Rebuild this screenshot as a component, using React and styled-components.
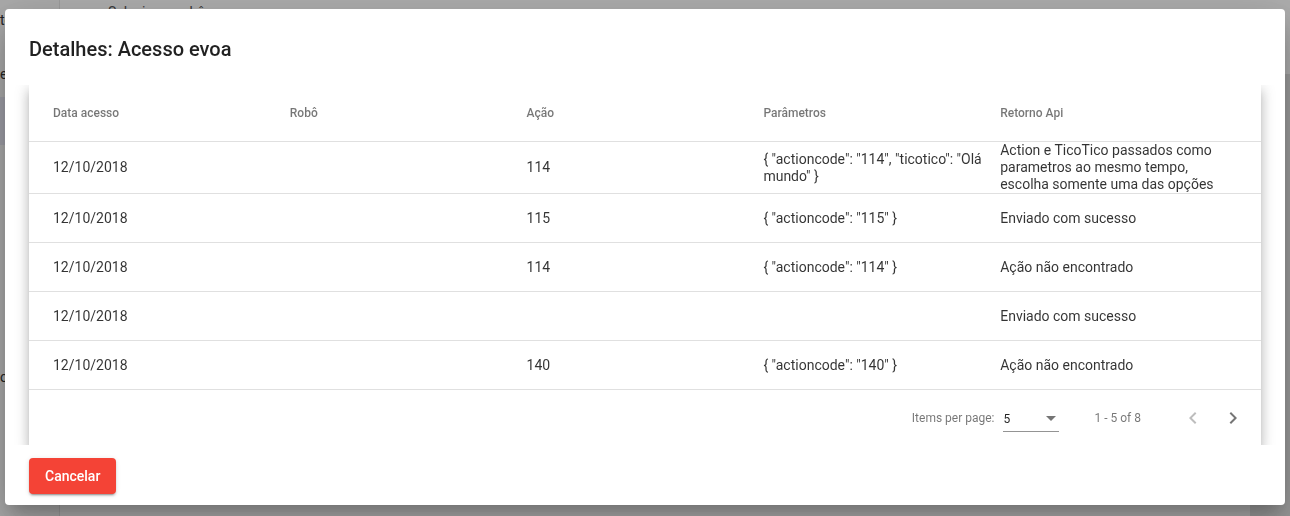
import React from 'react'
import styled, { createGlobalStyle } from 'styled-components'

const GlobalStyle = createGlobalStyle`
    html, body {
        margin: 0;
        padding: 0;
        height: 100%;
        overflow: hidden;
        background: #fff;
        font-family: Roboto, "Helvetica Neue", sans-serif;
    }
    #root {
        height: 100%;
    }
`

// page behind the dialog
const Page = styled.div`
    display: flex;
    height: 100%;
    background: #fff;
`

const Sidebar = styled.nav`
    width: 59px;
    flex-shrink: 0;
    background: #fafafa;
    border-right: 1px solid #e6e6e6;
    display: flex;
    flex-direction: column;
    padding-top: 10px;
    overflow: hidden;
`

const SideItem = styled.div`
    height: ${(props) => props.height || 48}px;
    flex-shrink: 0;
    display: flex;
    align-items: center;
    font-size: 14px;
    color: #333;
    white-space: nowrap;
    padding-left: ${(props) => (props.active ? 16 : 0)}px;
    background: ${(props) => (props.active ? '#e8e8f4' : 'transparent')};
`

const Main = styled.main`
    flex: 1;
    display: flex;
    flex-direction: column;
`

const TopBar = styled.div`
    height: 70px;
    padding: 4px 0 0 48px;
    font-size: 14px;
    color: #555;
`

const Panel = styled.div`
    flex: 1;
    margin-left: auto;
    width: 40px;
    background: #e4e4e4;
`

const Backdrop = styled.div`
    position: fixed;
    inset: 0;
    background: rgba(0, 0, 0, 0.32);
`

const Dialog = styled.div`
    position: fixed;
    left: 5px;
    top: 9px;
    width: 1280px;
    height: 496px;
    box-sizing: border-box;
    padding: 24px 24px 0;
    background: #fff;
    border-radius: 4px;
    box-shadow: 0 11px 15px -7px rgba(0, 0, 0, 0.2), 0 24px 38px 3px rgba(0, 0, 0, 0.14),
        0 9px 46px 8px rgba(0, 0, 0, 0.12);
    display: flex;
    flex-direction: column;
`

const Title = styled.h2`
    margin: 0 0 20px;
    font: 500 20px/32px Roboto, sans-serif;
    color: rgba(0, 0, 0, 0.87);
`

const Content = styled.div`
    margin: 0 -24px;
    padding: 0 24px;
    height: 360px;
    overflow: hidden;
`

const Table = styled.div`
    background: #fff;
    box-shadow: 0 5px 5px -3px rgba(0, 0, 0, 0.2), 0 8px 10px 1px rgba(0, 0, 0, 0.14),
        0 3px 14px 2px rgba(0, 0, 0, 0.12);
`

const Row = styled.div`
    display: flex;
    align-items: center;
    min-height: ${(props) => (props.header ? 56 : 48)}px;
    border-bottom: 1px solid rgba(0, 0, 0, 0.12);
`

const Cell = styled.div`
    flex: 1;
    min-width: 0;
    font-size: ${(props) => (props.header ? 12 : 14)}px;
    font-weight: ${(props) => (props.header ? 500 : 400)};
    line-height: 17px;
    color: ${(props) => (props.header ? 'rgba(0, 0, 0, 0.54)' : 'rgba(0, 0, 0, 0.8)')};
    word-wrap: break-word;

    &:first-child {
        padding-left: 24px;
    }
    &:last-child {
        padding-right: 24px;
    }
`

const Paginator = styled.div`
    display: flex;
    align-items: center;
    justify-content: flex-end;
    min-height: 56px;
    padding: 0 8px;
    font-size: 12px;
    color: rgba(0, 0, 0, 0.54);
`

const PageSize = styled.div`
    display: flex;
    align-items: center;
    margin-right: 8px;
`

const PageLabel = styled.span`
    margin: 0 4px;
`

const Select = styled.div`
    width: 56px;
    margin: 6px 4px 0;
    height: 22px;
    box-sizing: border-box;
    display: flex;
    align-items: center;
    justify-content: space-between;
    border-bottom: 1px solid rgba(0, 0, 0, 0.42);
    color: rgba(0, 0, 0, 0.87);
    font-size: 12px;
    padding: 0 3px 4px 1px;
`

const Arrow = styled.span`
    width: 0;
    height: 0;
    border-left: 5px solid transparent;
    border-right: 5px solid transparent;
    border-top: 5px solid rgba(0, 0, 0, 0.54);
`

const Range = styled.span`
    margin: 0 32px 0 24px;
`

const NavButton = styled.button`
    width: 40px;
    height: 40px;
    border: 0;
    padding: 0;
    background: none;
    display: flex;
    align-items: center;
    justify-content: center;
    color: ${(props) => (props.disabled ? 'rgba(0, 0, 0, 0.26)' : 'rgba(0, 0, 0, 0.54)')};
`

const Actions = styled.div`
    display: flex;
    padding: 13px 0 11px;
`

const Button = styled.button`
    height: 36px;
    padding: 0 16px;
    border: 0;
    border-radius: 4px;
    background: #f44336;
    color: #fff;
    font: 500 14px/36px Roboto, sans-serif;
    box-shadow: 0 3px 1px -2px rgba(0, 0, 0, 0.2), 0 2px 2px 0 rgba(0, 0, 0, 0.14),
        0 1px 5px 0 rgba(0, 0, 0, 0.12);
`

const Chevron = ({ dir }) => (
    <svg width='24' height='24' viewBox='0 0 24 24' fill='currentColor'>
        {dir === 'left'
            ? <path d='M15.41 7.41 14 6l-6 6 6 6 1.41-1.41L10.83 12z' />
            : <path d='M10 6 8.59 7.41 13.17 12l-4.58 4.59L10 18l6-6z' />}
    </svg>
)

const columns = ['Data acesso', 'Robô', 'Ação', 'Parâmetros', 'Retorno Api']

const acessos = [
    ['12/10/2018', '', '114', '{ "actioncode": "114", "ticotico": "Olá mundo" }', 'Action e TicoTico passados como parametros ao mesmo tempo, escolha somente uma das opções'],
    ['12/10/2018', '', '115', '{ "actioncode": "115" }', 'Enviado com sucesso'],
    ['12/10/2018', '', '114', '{ "actioncode": "114" }', 'Ação não encontrado'],
    ['12/10/2018', '', '', '', 'Enviado com sucesso'],
    ['12/10/2018', '', '140', '{ "actioncode": "140" }', 'Ação não encontrado'],
]

function App() {
    return (
        <>
            <GlobalStyle />
            <Page>
                <Sidebar>
                    <SideItem height={20}>tools</SideItem>
                    <SideItem height={20} />
                    <SideItem height={47}>eventos</SideItem>
                    <SideItem active>Robôs</SideItem>
                    <SideItem height={208} />
                    <SideItem>obs</SideItem>
                </Sidebar>
                <Main>
                    <TopBar>Selecionar robô</TopBar>
                    <Panel />
                </Main>
            </Page>
            <Backdrop />
            <Dialog>
                <Title>Detalhes: Acesso evoa</Title>
                <Content>
                    <Table>
                        <Row header>
                            {columns.map((c) => <Cell header key={c}>{c}</Cell>)}
                        </Row>
                        {acessos.map((row, i) => (
                            <Row key={i}>
                                {row.map((v, j) => <Cell key={j}>{v}</Cell>)}
                            </Row>
                        ))}
                        <Paginator>
                            <PageSize>
                                <PageLabel>Items per page:</PageLabel>
                                <Select>5<Arrow /></Select>
                            </PageSize>
                            <Range>1 - 5 of 8</Range>
                            <NavButton disabled><Chevron dir='left' /></NavButton>
                            <NavButton><Chevron dir='right' /></NavButton>
                        </Paginator>
                    </Table>
                </Content>
                <Actions>
                    <Button>Cancelar</Button>
                </Actions>
            </Dialog>
        </>
    )
}

export default App
